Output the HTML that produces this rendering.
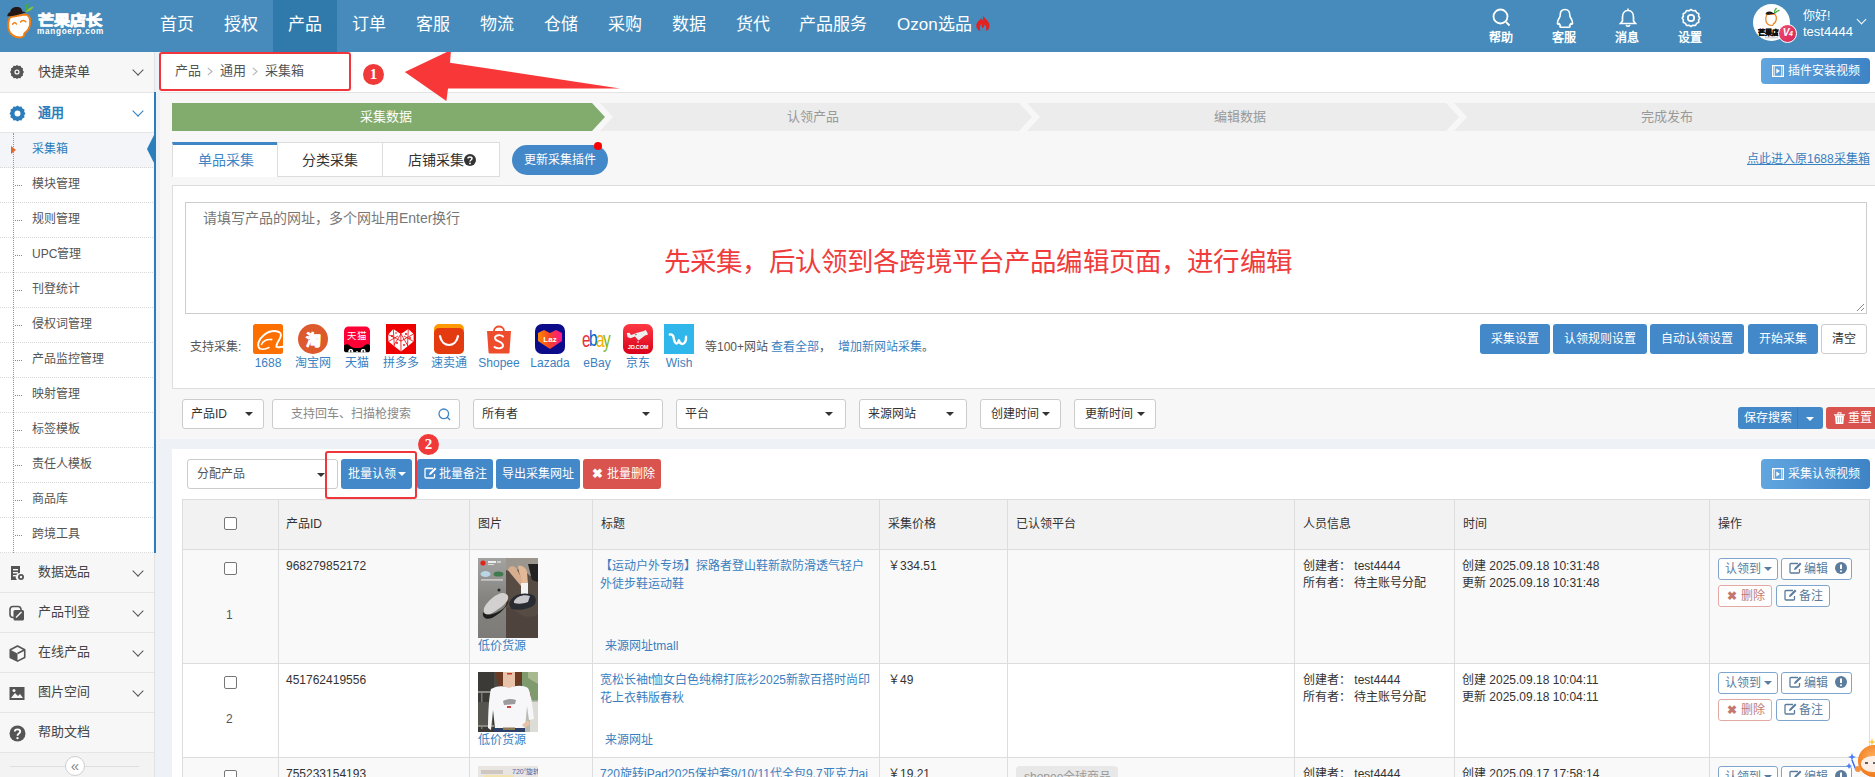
<!DOCTYPE html>
<html lang="zh-CN"><head><meta charset="utf-8">
<style>
*{box-sizing:border-box;margin:0;padding:0}
html,body{width:1875px;height:777px;overflow:hidden;background:#eef1f6;font-family:"Liberation Sans",sans-serif;font-size:12px;color:#333}
.abs{position:absolute}
#hdr{position:absolute;left:0;top:0;width:1875px;height:52px;background:#468bbb}
.nav{position:absolute;top:0;height:52px;line-height:49.5px;color:#fff;font-size:17px;text-align:center;width:64px}
.nav.act{background:#2f7aab}
.ri{position:absolute;top:0;width:40px;height:52px;color:#fff;text-align:center}
.ri svg{position:absolute;left:11px;top:8px}
.ri span{position:absolute;left:0;width:40px;top:30px;font-size:12px;line-height:16px;font-weight:bold}
#side{position:absolute;left:0;top:52px;width:155px;height:725px;background:#f7f7f7;border-right:1px solid #e2e2e2}
.mi{position:absolute;left:0;width:154px;height:40px;border-bottom:1px solid #e5e5e5;font-size:13px;color:#444;line-height:40px}
.mi .t{position:absolute;left:38px;top:0}
.mi svg.ic{position:absolute;left:9px;top:12px}
.mi .chev{position:absolute;left:133.5px;top:13.5px;width:8px;height:8px;border-right:1.5px solid #555;border-bottom:1.5px solid #555;transform:rotate(45deg)}
.si{position:absolute;left:0;width:153px;height:35px;border-bottom:1px dotted #d9d9d9;font-size:12px;color:#555;line-height:32px}
.si .t{position:absolute;left:32px}
.si .tick{position:absolute;left:15px;top:17px;width:7px;border-top:1px dotted #5a95c8}
.step{position:absolute;top:103px;height:28px;line-height:28px;text-align:center;font-size:13px;color:#999}
.tab{position:absolute;top:142px;height:35px;line-height:36px;text-align:center;font-size:14px;color:#333}
.btn{position:absolute;height:30px;background:#4388c8;color:#fff;border-radius:3px;font-size:12px;line-height:30px;text-align:center;white-space:nowrap}
.btnv{position:absolute;background:linear-gradient(90deg,#62a6e0,#3e83c5);color:#fff;border-radius:4px;font-size:12px;line-height:25px;text-align:center;white-space:nowrap;padding-left:13px}
.btnv svg.vi{position:absolute;left:11px;top:50%;margin-top:-6px}
.sel{position:absolute;top:399px;height:30px;background:#fff;border:1px solid #ccc;border-radius:3px;font-size:12px;line-height:28px;color:#333;padding-left:8px;white-space:nowrap}
.caret{position:absolute;top:12px;width:0;height:0;border-left:4px solid transparent;border-right:4px solid transparent;border-top:4px solid #333}
.vl{position:absolute;top:0;height:300px;border-left:1px solid #ddd}
.th{position:absolute;top:516px;font-size:12px;line-height:16px;color:#333}
.td{position:absolute;font-size:12px;line-height:16px;color:#333;white-space:nowrap}
.cb{position:absolute;width:13px;height:13px;border:1px solid #767676;border-radius:2px;background:#fff}
.ob{position:absolute;height:22px;border:1px solid #7ea5cd;border-radius:3px;background:#fff;color:#5b7c9c;font-size:12px;line-height:21px;text-align:center;white-space:nowrap}
.img-shoe{background:linear-gradient(90deg,#8a8a88 0,#7d7c78 48%,#4a443d 52%,#3e3a35 100%)}
.img-shirt{background:linear-gradient(90deg,#3c3a35,#ddd 30%,#f4f4f4 50%,#ddd 70%,#6e7060)}
.img-ipad{background:#d9d4cc}
</style></head><body>
<div id="hdr">
  <!-- logo -->
  <svg class="abs" style="left:0;top:0" width="36" height="42" viewBox="0 0 36 42">
    <path d="M10.5 17 C8 19 8 26 8.6 29 C9.5 34 14 37.5 20 37.5 C23 37.5 24.5 36 24.2 33.5 C28 31 30.5 26 30.2 21 C30 17 28 14.5 24.5 14.5Z" fill="#fff" stroke="#ef7d14" stroke-width="1.9" stroke-linejoin="round"/>
    <path d="M7.2 16.2 C7.5 13.5 9 12.5 10.2 12 C10.5 9 13 7 17 7 C20.5 7 22 9 22.3 11.5 C24 11.8 25.5 12 25.8 12.4 C21 14 12 16.5 7.2 16.2Z" fill="#231815"/>
    <path d="M25 12 C24.5 8 26 4 28 2.2 C29 5 28.5 9 25 12Z" fill="#3fae3a"/>
    <path d="M25.5 12.2 C27.5 9 30.5 7 33.8 6.6 C32.5 9.5 29 12 25.5 12.2Z" fill="#86c33a"/>
    <path d="M12.6 24.3 C13.5 22.3 15.5 22.3 16.4 24" stroke="#ef7d14" stroke-width="1.5" fill="none" stroke-linecap="round"/>
    <path d="M20.5 22 C22 20 24.5 20.3 25.8 21.8" stroke="#ef7d14" stroke-width="1.5" fill="none" stroke-linecap="round"/>
  </svg>
  <div class="abs" style="left:37.5px;top:9px;color:#fff;font-size:16px;font-weight:bold;line-height:20px;white-space:nowrap;-webkit-text-stroke:1.1px #fff;transform:scale(1,0.86);transform-origin:0 100%;letter-spacing:0.2px">芒果店长</div>
  <div class="abs" style="left:37px;top:26.5px;color:#fff;font-size:8.2px;font-weight:bold;line-height:9px;letter-spacing:0.7px;white-space:nowrap">mangoerp.com</div>

  <div class="nav" style="left:145px">首页</div>
  <div class="nav" style="left:209px">授权</div>
  <div class="nav act" style="left:273px">产品</div>
  <div class="nav" style="left:337px">订单</div>
  <div class="nav" style="left:401px">客服</div>
  <div class="nav" style="left:465px">物流</div>
  <div class="nav" style="left:529px">仓储</div>
  <div class="nav" style="left:593px">采购</div>
  <div class="nav" style="left:657px">数据</div>
  <div class="nav" style="left:721px">货代</div>
  <div class="nav" style="left:785px;width:96px">产品服务</div>
  <div class="nav" style="left:881px;width:120px;text-align:left;padding-left:16px">Ozon选品</div>
  <svg class="abs" style="left:976px;top:15px" width="14" height="16" viewBox="0 0 14 16"><path d="M6.5 0 C8 3 13.5 6 13.5 10.5 C13.5 13.5 12 15.5 9.8 16 C10.8 14 10.5 11.5 8.6 9.5 C8.3 11.5 7.3 12.8 6.2 13.4 C5.6 12 5.3 10.8 5.8 8.6 C3.8 10.3 3.3 13 4.3 16 C1.8 15.3 0.3 13.3 0.3 10.8 C0.3 7 4 5 5.6 2.8 C5.8 4.3 6.1 5 6.6 5.6 C7.2 3.8 7.2 1.8 6.5 0Z" fill="#e3211f"/></svg>

  <div class="ri" style="left:1481px">
    <svg width="20" height="20" viewBox="0 0 20 20"><circle cx="8.5" cy="8.5" r="7" fill="none" stroke="#fff" stroke-width="1.8"/><path d="M14 14 L17.5 17.5" stroke="#fff" stroke-width="1.8"/></svg>
    <span>帮助</span></div>
  <div class="ri" style="left:1544px">
    <svg width="20" height="20" viewBox="0 0 20 20" style="top:8px"><path d="M10 1.5 C6.5 1.5 5.2 4 5.2 7 C5.2 8 5 8.8 4.5 9.5 C3.5 11 2.2 13 2.4 15.5 C2.5 16.5 3.5 16.5 4.2 15.5 C4.5 16.5 5 17 5.5 17.5 C4.5 18 4.8 19.2 6 19.2 L9 19.2 C9.5 19.2 10.5 19.2 11 19.2 L14 19.2 C15.2 19.2 15.5 18 14.5 17.5 C15 17 15.5 16.5 15.8 15.5 C16.5 16.5 17.5 16.5 17.6 15.5 C17.8 13 16.5 11 15.5 9.5 C15 8.8 14.8 8 14.8 7 C14.8 4 13.5 1.5 10 1.5Z" fill="none" stroke="#fff" stroke-width="1.6" stroke-linejoin="round"/></svg>
    <span>客服</span></div>
  <div class="ri" style="left:1607px">
    <svg width="20" height="20" viewBox="0 0 20 20"><path d="M10 2.5 C6 2.5 4.5 6 4.5 9 L4.5 13 L2.5 15.5 L17.5 15.5 L15.5 13 L15.5 9 C15.5 6 14 2.5 10 2.5Z" fill="none" stroke="#fff" stroke-width="1.7"/><path d="M8 17 Q10 19.5 12 17" stroke="#fff" stroke-width="1.5" fill="none"/><path d="M10 0.5 L10 2.5" stroke="#fff" stroke-width="1.5"/></svg>
    <span>消息</span></div>
  <div class="ri" style="left:1670px">
    <svg width="20" height="20" viewBox="0 0 20 20"><path d="M10 1.5 L12 2.8 L14.5 2.5 L15.6 4.6 L17.8 5.7 L17.6 8.2 L18.8 10 L17.6 11.8 L17.8 14.3 L15.6 15.4 L14.5 17.5 L12 17.2 L10 18.5 L8 17.2 L5.5 17.5 L4.4 15.4 L2.2 14.3 L2.4 11.8 L1.2 10 L2.4 8.2 L2.2 5.7 L4.4 4.6 L5.5 2.5 L8 2.8Z" fill="none" stroke="#fff" stroke-width="1.6" stroke-linejoin="round"/><circle cx="10" cy="10" r="3.2" fill="none" stroke="#fff" stroke-width="1.8"/></svg>
    <span>设置</span></div>

  <div class="abs" style="left:1753px;top:4px;width:37px;height:37px;border-radius:50%;background:#fff;overflow:hidden">
    <svg width="37" height="37" viewBox="0 0 37 37"><g transform="translate(0,-2.5)"><path d="M14 13 C12.5 15 12.5 19 13.5 21 C14.5 23 16.5 24 19 24 C20 24 20.5 23 20.3 22.5 C22.5 21 23.5 18.5 23.3 16 C23 13.5 21.5 12.5 20 12.5Z" fill="#fff" stroke="#ef7d14" stroke-width="1.2"/><path d="M12.5 12.8 C13 11 14 10 16 10 C18 9.6 19.5 10.5 20 11.5 C21 11.6 22 11.8 22.3 12 C19 13 15 13.5 12.5 12.8Z" fill="#231815"/><path d="M21.5 11.5 C21.5 9.5 22.5 7.5 23.5 6.5 M22 11.8 C23 10 24.5 9 26.5 8.8" stroke="#3fae3a" stroke-width="1.3" fill="none"/></g><text x="18.5" y="31" text-anchor="middle" font-size="7.2" font-weight="bold" fill="#111" stroke="#111" stroke-width="0.5">芒果店长</text><rect x="12" y="33.5" width="13" height="0.7" fill="#aaa"/></svg>
  </div>
  <div class="abs" style="left:1778px;top:24px;width:19px;height:19px;border-radius:50%;background:linear-gradient(135deg,#f0506e,#d6245a);border:1.5px solid #fff;color:#fff;font-size:10px;font-weight:bold;line-height:16px;text-align:center;font-style:italic;letter-spacing:-0.5px">V<span style="font-size:7px">4</span></div>
  <div class="abs" style="left:1803px;top:8px;color:#fff;font-size:12px;line-height:16px">你好!</div>
  <div class="abs" style="left:1803px;top:24px;color:#fff;font-size:13px;line-height:16px">test4444</div>
  <div class="abs" style="left:1858px;top:16px;width:7px;height:7px;border-right:1.5px solid #fff;border-bottom:1.5px solid #fff;transform:rotate(45deg)"></div>
</div>

<div id="side">

  <div class="mi" style="top:0;height:41px;background:#f7f7f7">
    <svg class="ic" width="16" height="16" viewBox="0 0 16 16"><path d="M8 1 L9.6 2 L11.5 1.8 L12.3 3.5 L14 4.3 L13.8 6.2 L15 8 L13.8 9.8 L14 11.7 L12.3 12.5 L11.5 14.2 L9.6 14 L8 15 L6.4 14 L4.5 14.2 L3.7 12.5 L2 11.7 L2.2 9.8 L1 8 L2.2 6.2 L2 4.3 L3.7 3.5 L4.5 1.8 L6.4 2Z" fill="#555"/><circle cx="8" cy="8" r="2.6" fill="#f7f7f7"/><circle cx="8" cy="8" r="1.3" fill="#555"/></svg>
    <span class="t">快捷菜单</span><i class="chev"></i></div>
  <div class="mi" style="top:41px;background:#fff;color:#2b7dbc;font-weight:bold">
    <svg class="ic" width="17" height="17" viewBox="0 0 16 16"><path d="M8 0.5 L9.7 1.7 L11.8 1.4 L12.6 3.4 L14.6 4.2 L14.3 6.3 L15.5 8 L14.3 9.7 L14.6 11.8 L12.6 12.6 L11.8 14.6 L9.7 14.3 L8 15.5 L6.3 14.3 L4.2 14.6 L3.4 12.6 L1.4 11.8 L1.7 9.7 L0.5 8 L1.7 6.3 L1.4 4.2 L3.4 3.4 L4.2 1.4 L6.3 1.7Z" fill="#2b7dbc"/><circle cx="8" cy="8" r="2.8" fill="#fff"/></svg>
    <span class="t">通用</span><i class="chev" style="border-color:#2b7dbc"></i></div>
  <div class="abs" style="left:154px;top:40px;width:2px;height:461px;background:#2b7dbc"></div>
  <div class="si" style="top:81px;background:#f3f5f9;color:#2b7dbc"><i class="abs" style="left:11px;top:13px;border-left:5px solid #e0662a;border-top:4px solid transparent;border-bottom:4px solid transparent"></i><span class="t">采集箱</span></div>
  <i class="abs" style="left:147px;top:82.5px;border-right:7px solid #2b7dbc;border-top:14px solid transparent;border-bottom:14px solid transparent"></i>
  <div class="si" style="top:116px;background:#fff"><i class="tick"></i><span class="t">模块管理</span></div>
  <div class="si" style="top:151px;background:#fff"><i class="tick"></i><span class="t">规则管理</span></div>
  <div class="si" style="top:186px;background:#fff"><i class="tick"></i><span class="t">UPC管理</span></div>
  <div class="si" style="top:221px;background:#fff"><i class="tick"></i><span class="t">刊登统计</span></div>
  <div class="si" style="top:256px;background:#fff"><i class="tick"></i><span class="t">侵权词管理</span></div>
  <div class="si" style="top:291px;background:#fff"><i class="tick"></i><span class="t">产品监控管理</span></div>
  <div class="si" style="top:326px;background:#fff"><i class="tick"></i><span class="t">映射管理</span></div>
  <div class="si" style="top:361px;background:#fff"><i class="tick"></i><span class="t">标签模板</span></div>
  <div class="si" style="top:396px;background:#fff"><i class="tick"></i><span class="t">责任人模板</span></div>
  <div class="si" style="top:431px;background:#fff"><i class="tick"></i><span class="t">商品库</span></div>
  <div class="si" style="top:466px;background:#fff"><i class="tick"></i><span class="t">跨境工具</span></div>
  <div class="abs" style="left:13px;top:81px;height:420px;border-left:1px dotted #6aa0d0"></div>
  <div class="mi" style="top:501px;line-height:38px"><svg class="ic" width="16" height="16" viewBox="0 0 16 16"><path d="M2 1 H11 V8 A4 4 0 0 0 8 15 H2Z" fill="#555"/><rect x="4" y="4" width="5" height="1.4" fill="#f7f7f7"/><rect x="4" y="7" width="5" height="1.4" fill="#f7f7f7"/><rect x="4" y="10" width="3" height="1.4" fill="#f7f7f7"/><circle cx="12" cy="12" r="3" fill="#555"/><circle cx="12" cy="12" r="1.2" fill="#f7f7f7"/></svg><span class="t">数据选品</span><i class="chev"></i></div>
  <div class="mi" style="top:541px;line-height:38px"><svg class="ic" width="16" height="16" viewBox="0 0 16 16"><rect x="1" y="1.5" width="11" height="11" rx="3" fill="none" stroke="#555" stroke-width="1.6"/><rect x="4.5" y="5" width="10.5" height="10.5" rx="1.5" fill="#555"/><path d="M7 12.5 L12.5 7" stroke="#f7f7f7" stroke-width="1.5"/></svg><span class="t">产品刊登</span><i class="chev"></i></div>
  <div class="mi" style="top:581px;line-height:38px"><svg class="ic" width="17" height="17" viewBox="0 0 16 16"><path d="M8 1 L14.8 4.5 V11.8 L8 15.2 L1.2 11.8 V4.5Z" fill="#f7f7f7" stroke="#555" stroke-width="1.5" stroke-linejoin="round"/><path d="M1.2 4.5 L8 8 V15.2 L1.2 11.8Z" fill="#555"/><path d="M8 8 L14.8 4.5" stroke="#555" stroke-width="1.5"/></svg><span class="t">在线产品</span><i class="chev"></i></div>
  <div class="mi" style="top:621px;line-height:38px"><svg class="ic" width="16" height="16" viewBox="0 0 16 16"><rect x="0.5" y="2" width="15" height="13" fill="#555"/><path d="M2 13 L6 8 L9 11 L11 9 L14 13Z" fill="#f7f7f7"/><circle cx="5" cy="5.5" r="1.5" fill="#f7f7f7"/></svg><span class="t">图片空间</span><i class="chev"></i></div>
  <div class="mi" style="top:661px;line-height:38px"><svg class="ic" width="17" height="17" viewBox="0 0 16 16"><circle cx="8" cy="8" r="7.5" fill="#555"/><path d="M5.5 6 C5.5 3.5 10.5 3.5 10.5 6 C10.5 8 8 8 8 10" stroke="#fff" stroke-width="1.8" fill="none"/><circle cx="8" cy="12.3" r="1.1" fill="#fff"/></svg><span class="t">帮助文档</span></div>
  <div class="abs" style="left:0;top:701px;width:154px;height:30px;background:#f3f3f3"></div>
  <div class="abs" style="left:10px;top:714px;width:129px;border-top:1px solid #dedede"></div>
  <div class="abs" style="left:65px;top:704px;width:20px;height:20px;border-radius:50%;border:1px solid #cfcfcf;background:#fff;color:#888;font-size:15px;line-height:17px;text-align:center">&laquo;</div>
</div>

<div id="main">

  <!-- breadcrumb bar -->
  <div class="abs" style="left:160px;top:52px;width:1715px;height:41px;background:#fff;border-bottom:1px solid #e3e3e3"></div>
  <div class="abs" style="left:175px;top:62px;font-size:13px;line-height:18px;color:#555">产品<svg style="margin:0 7px 0 6px;vertical-align:-1px" width="6" height="9" viewBox="0 0 6 9"><path d="M0.8 0.8 L5 4.5 L0.8 8.2" fill="none" stroke="#b5b5b5" stroke-width="1.1"/></svg>通用<svg style="margin:0 7px 0 6px;vertical-align:-1px" width="6" height="9" viewBox="0 0 6 9"><path d="M0.8 0.8 L5 4.5 L0.8 8.2" fill="none" stroke="#b5b5b5" stroke-width="1.1"/></svg>采集箱</div>
  <div class="abs" style="left:159px;top:52px;width:192px;height:39px;border:2px solid #f0353b;border-radius:3px"></div>
  <div class="abs" style="left:363px;top:64px;width:21px;height:21px;border-radius:50%;background:#f03a3a;color:#fff;font-family:'Liberation Serif',serif;font-weight:bold;font-size:15px;line-height:21px;text-align:center">1</div>
  <a class="abs btnv" style="left:1761px;top:58px;width:109px;height:26px;line-height:26px;padding-left:16px"><svg class="vi" width="12" height="12" viewBox="0 0 12 12"><rect x="0.6" y="0.6" width="10.8" height="10.8" fill="none" stroke="#fff" stroke-width="1.2"/><path d="M2.3 0.6 V11.4 M9.7 0.6 V11.4" stroke="#fff" stroke-width="0.8"/><path d="M4.3 3.5 L8 6 L4.3 8.5Z" fill="#fff"/></svg>插件安装视频</a>

  <!-- upper panel -->
  <div class="abs" style="left:160px;top:93px;width:1715px;height:346px;background:#f7f7f7"></div>
  <svg class="abs" style="left:0;top:0" width="1875" height="140" viewBox="0 0 1875 140">
    <polygon points="172,103 592,103 605,117 592,131 172,131" fill="#81ac6e"/>
    <polygon points="600,103 1019,103 1032,117 1019,131 600,131 613,117" fill="#ececec"/>
    <polygon points="1027,103 1446,103 1459,117 1446,131 1027,131 1040,117" fill="#ececec"/>
    <polygon points="1454,103 1880,103 1880,131 1454,131 1467,117" fill="#ececec"/>
  </svg>
  <div class="abs step" style="left:172px;width:427px;color:#fff">采集数据</div>
  <div class="abs step" style="left:599px;width:427px">认领产品</div>
  <div class="abs step" style="left:1026px;width:427px">编辑数据</div>
  <div class="abs step" style="left:1453px;width:427px">完成发布</div>

  <svg class="abs" style="left:400px;top:52px" width="230" height="52" viewBox="400 52 230 52"><path d="M404.8 72.1 L451 50 L450 62.8 L620 88.4 L448 88.4 L446.4 101 Z" fill="#f83838"/></svg>
  <!-- tabs -->
  <div class="abs" style="left:172px;top:142px;width:328px;height:35px;border:1px solid #ddd;background:#fff"></div>
  <div class="abs tab" style="left:172px;width:106px;line-height:30px;border-top:3px solid #3e86c6;color:#3e86c6;background:#fff;border-left:1px solid #ddd">单品采集</div>
  <div class="abs" style="left:277px;top:142px;height:35px;border-left:1px solid #ddd"></div>
  <div class="abs tab" style="left:278px;width:104px">分类采集</div>
  <div class="abs" style="left:382px;top:142px;height:35px;border-left:1px solid #ddd"></div>
  <div class="abs tab" style="left:383px;width:117px">店铺采集<svg style="vertical-align:-1px;margin-left:0px" width="12" height="12" viewBox="0 0 12 12"><circle cx="6" cy="6" r="6" fill="#333"/><path d="M4 4.6 C4 2.6 8 2.6 8 4.6 C8 6 6 6 6 7.5" stroke="#fff" stroke-width="1.5" fill="none"/><circle cx="6" cy="9.4" r="0.9" fill="#fff"/></svg></div>
  <div class="abs" style="left:512px;top:145px;width:96px;height:30px;border-radius:15px;background:#4388c8;color:#fff;font-size:12px;line-height:30px;text-align:center">更新采集插件</div>
  <div class="abs" style="left:594px;top:142px;width:8px;height:8px;border-radius:50%;background:#f00"></div>
  <div class="abs" style="left:1747px;top:151px;font-size:12px;line-height:16px;color:#3a7fc0;text-decoration:underline">点此进入原1688采集箱</div>

  <!-- collect panel -->
  <div class="abs" style="left:172px;top:185px;width:1703px;height:204px;background:#fff;border:1px solid #ddd;border-right:none"></div>
  <div class="abs" style="left:185px;top:202px;width:1682px;height:112px;border:1px solid #ccc;background:#fff"></div>
  <div class="abs" style="left:203px;top:209px;font-size:14px;line-height:18px;color:#777">请填写产品的网址，多个网址用Enter换行</div>
  <div class="abs" style="left:664px;top:245px;font-size:26.47px;line-height:34px;color:#f03c3c;white-space:nowrap;letter-spacing:0.16px">先采集，后认领到各跨境平台产品编辑页面，进行编辑</div>
  <svg class="abs" style="left:1855px;top:302px" width="10" height="10" viewBox="0 0 10 10"><path d="M9 2 L2 9 M9 6 L6 9" stroke="#888" stroke-width="1"/></svg>
  <div class="abs" style="left:190px;top:339px;font-size:12px;line-height:16px;color:#555">支持采集:</div>
  <div class="abs" style="left:253px;top:324px;width:30px;height:30px"><svg width="30" height="30" viewBox="0 0 30 30"><rect width="30" height="30" rx="2.5" fill="#fd7000"/><path d="M6.5 24.5 C3.5 21 6 15 11 11 C16 7 22 6.5 26 8 C29 9.5 28 13 26 16 C24.5 18.5 23 21 23.5 23 C25 23.7 27.5 23 30 22.8" fill="none" stroke="#fff" stroke-width="1.9" stroke-linecap="round"/><path d="M6.5 24.5 C9 25.5 13 25 16 23.5 M8.5 20.5 C10 17 14 15 17.5 15.5" fill="none" stroke="#fff" stroke-width="1.5" stroke-linecap="round"/><circle cx="18.5" cy="15.5" r="1" fill="#fff"/></svg></div>
  <div class="abs" style="left:238px;top:355px;width:60px;text-align:center;font-size:12px;line-height:16px;color:#3a7fc0">1688</div>
  <div class="abs" style="left:298px;top:324px;width:30px;height:30px"><svg width="30" height="30" viewBox="0 0 30 30"><circle cx="15" cy="15" r="15" fill="#dd5a2c"/><text x="15" y="21" text-anchor="middle" font-size="15" font-weight="bold" fill="#fff" stroke="#fff" stroke-width="0.7">淘</text></svg></div>
  <div class="abs" style="left:283px;top:355px;width:60px;text-align:center;font-size:12px;line-height:16px;color:#3a7fc0">淘宝网</div>
  <div class="abs" style="left:344px;top:324px;width:26px;height:30px"><svg width="26" height="30" viewBox="0 0 26 30"><path d="M0 8 C0 4 2 2.5 5 2.5 H21 C24 2.5 26 4 26 8 V25 C26 27 25 28 23 28 H3 C1 28 0 27 0 25Z" fill="#ff0036"/><text x="13" y="14.5" text-anchor="middle" font-size="9.5" fill="#fff">天猫</text><path d="M0 22 C0.5 20 3 19.5 5 21 C7 23.5 9 24 13 24 C17 24 19 23.5 21 21 C23 19.5 25.5 20 26 22 V26 C26 27.5 25 28.3 23.5 28.3 H2.5 C1 28.3 0 27.5 0 26Z" fill="#000"/><path d="M4.3 28.3 C4.3 25.3 5.6 25 6.8 25 C8 25 9.3 25.3 9.3 28.3Z M16.7 28.3 C16.7 25.3 18 25 19.2 25 C20.4 25 21.7 25.3 21.7 28.3Z" fill="#fff"/><path d="M6.3 28.3 V26.3 C6.3 26 7.3 26 7.3 26.3 V28.3Z M18.7 28.3 V26.3 C18.7 26 19.7 26 19.7 26.3 V28.3Z" fill="#000"/><rect x="12.3" y="27" width="1.4" height="1.3" fill="#fff"/></svg></div>
  <div class="abs" style="left:327px;top:355px;width:60px;text-align:center;font-size:12px;line-height:16px;color:#3a7fc0">天猫</div>
  <div class="abs" style="left:386px;top:324px;width:30px;height:30px"><svg width="30" height="30" viewBox="0 0 30 30"><rect width="30" height="30" fill="#ee0000"/><path d="M2.2 10.5 L7.3 5 L14.8 10 L22.3 5 L27.6 10 L27.6 17.5 L15 27.5 L2.4 17.5Z" fill="#fff"/><path d="M7.3 5 L8.3 22 M14.8 10 L15 27.5 M22.3 5 L21.5 22.5 M2.2 10.5 L15 17 L27.6 10 M2.4 17.5 L12 12 M27.6 17.5 L18 12 M8 21 L14.8 10 M21.7 21.5 L15 10" stroke="#ee0000" stroke-width="0.8" fill="none"/><circle cx="6" cy="12" r="1" fill="#ee0000"/><circle cx="11" cy="19" r="0.9" fill="#ee0000"/><circle cx="20" cy="10" r="1" fill="#ee0000"/><circle cx="24" cy="14" r="0.9" fill="#ee0000"/><circle cx="18" cy="21" r="0.9" fill="#ee0000"/><circle cx="10" cy="9" r="0.8" fill="#ee0000"/></svg></div>
  <div class="abs" style="left:371px;top:355px;width:60px;text-align:center;font-size:12px;line-height:16px;color:#3a7fc0">拼多多</div>
  <div class="abs" style="left:434px;top:324px;width:30px;height:30px"><svg width="30" height="30" viewBox="0 0 30 30"><rect width="30" height="30" rx="5" fill="#ff9a00"/><rect y="4" width="30" height="26" rx="5" fill="#e43a0f"/><path d="M6 12 C8 24 22 24 24 12" fill="none" stroke="#fff" stroke-width="2.2" stroke-linecap="round"/></svg></div>
  <div class="abs" style="left:419px;top:355px;width:60px;text-align:center;font-size:12px;line-height:16px;color:#3a7fc0">速卖通</div>
  <div class="abs" style="left:486px;top:324px;width:26px;height:30px"><svg width="26" height="30" viewBox="0 0 26 30"><path d="M8 7 C8 1 18 1 18 7" fill="none" stroke="#ee4d2d" stroke-width="1.8"/><path d="M1 7 H25 L23.5 28 C23.5 29 23 29.5 22 29.5 H4 C3 29.5 2.5 29 2.5 28Z" fill="#ee4d2d"/><path d="M17 12.5 C15 10.5 9 10.5 9 14 C9 18 17 17 17 21.5 C17 25 11 25 8.5 23" fill="none" stroke="#fff" stroke-width="1.9" stroke-linecap="round"/></svg></div>
  <div class="abs" style="left:469px;top:355px;width:60px;text-align:center;font-size:12px;line-height:16px;color:#3a7fc0">Shopee</div>
  <div class="abs" style="left:535px;top:324px;width:30px;height:30px"><svg width="30" height="30" viewBox="0 0 30 30"><defs><linearGradient id="lz" x1="0" x2="1"><stop offset="0" stop-color="#ff8a00"/><stop offset="0.5" stop-color="#f5412a"/><stop offset="1" stop-color="#ff1591"/></linearGradient></defs><rect width="30" height="30" rx="7" fill="#0c0b8a"/><path d="M3 9 L9 6 L15 9 L21 6 L27 9 V17 L15 25 L3 17Z" fill="url(#lz)"/><text x="15" y="18" text-anchor="middle" font-size="8" font-weight="bold" fill="#fff" font-family="Liberation Sans">Laz</text></svg></div>
  <div class="abs" style="left:520px;top:355px;width:60px;text-align:center;font-size:12px;line-height:16px;color:#3a7fc0">Lazada</div>
  <div class="abs" style="left:582px;top:324px;width:30px;height:30px"><svg width="30" height="30" viewBox="0 0 30 30"><g transform="scale(0.7,1)"><text x="0" y="23" font-size="22" font-family="Liberation Sans" letter-spacing="-2.2"><tspan fill="#e53238">e</tspan><tspan fill="#0064d2" dy="-1">b</tspan><tspan fill="#f5af02" dy="1">a</tspan><tspan fill="#86b817">y</tspan></text></g></svg></div>
  <div class="abs" style="left:567px;top:355px;width:60px;text-align:center;font-size:12px;line-height:16px;color:#3a7fc0">eBay</div>
  <div class="abs" style="left:623px;top:324px;width:30px;height:30px"><svg width="30" height="30" viewBox="0 0 30 30"><defs><linearGradient id="jd" x1="0" y1="0" x2="0" y2="1"><stop offset="0" stop-color="#ff3a44"/><stop offset="1" stop-color="#d8001a"/></linearGradient></defs><rect width="30" height="30" rx="6.5" fill="url(#jd)"/><path d="M3.8 9 L6.5 8.8 L8 11 L15 8.5 L21 7 L22.5 5.8 L24 8 L25 10.5 L22 11.5 L15.5 16.5 L12 12.5 L7.5 14.3 L4.5 13Z" fill="#eee"/><path d="M11.5 10.5 L14 10 L13 11.3Z" fill="#555"/><circle cx="15" cy="18" r="0.8" fill="#eee"/><text x="15" y="25" text-anchor="middle" font-size="5.6" font-weight="bold" fill="#fff" font-family="Liberation Sans" letter-spacing="-0.2">JD.COM</text></svg></div>
  <div class="abs" style="left:608px;top:355px;width:60px;text-align:center;font-size:12px;line-height:16px;color:#3a7fc0">京东</div>
  <div class="abs" style="left:664px;top:324px;width:30px;height:30px"><svg width="30" height="30" viewBox="0 0 30 30"><rect width="30" height="30" fill="#2fb7ec"/><path d="M5.8 10.5 C7.3 10.2 9 11 9.5 13 C10 16 10.6 19.5 12.6 19.5 C14 19.5 14.6 17.5 14.9 16.3 C15.3 18 16.2 20 18.5 20 C21 20 22.3 16 22 12.8" fill="none" stroke="#fff" stroke-width="2.4" stroke-linecap="round" stroke-linejoin="round"/></svg></div>
  <div class="abs" style="left:649px;top:355px;width:60px;text-align:center;font-size:12px;line-height:16px;color:#3a7fc0">Wish</div>
  <div class="abs" style="left:705px;top:339px;font-size:12px;line-height:16px;color:#555;white-space:nowrap">等100+网站 <span style="color:#3a7fc0">查看全部</span>， <span style="color:#3a7fc0;margin-left:3px">增加新网站采集</span>。</div>
  <div class="abs btn" style="left:1480px;top:324px;width:70px">采集设置</div>
  <div class="abs btn" style="left:1553px;top:324px;width:94px">认领规则设置</div>
  <div class="abs btn" style="left:1650px;top:324px;width:94px">自动认领设置</div>
  <div class="abs btn" style="left:1748px;top:324px;width:70px">开始采集</div>
  <div class="abs btn" style="left:1821px;top:324px;width:46px;background:#fff;color:#333;border:1px solid #ccc;line-height:28px">清空</div>

  <!-- filters -->
  <div class="abs sel" style="left:182px;width:82px">产品ID<i class="caret" style="left:62px"></i></div>
  <div class="abs sel" style="left:272px;width:188px;color:#888;padding-left:18px">支持回车、扫描枪搜索<svg class="abs" style="left:165px;top:8px" width="13" height="13" viewBox="0 0 13 13"><circle cx="5.8" cy="5.8" r="4.8" fill="none" stroke="#3e86c6" stroke-width="1.3"/><path d="M9.3 9.3 L12 12" stroke="#3e86c6" stroke-width="1.3"/></svg></div>
  <div class="abs sel" style="left:473px;width:190px">所有者<i class="caret" style="left:168px"></i></div>
  <div class="abs sel" style="left:676px;width:170px">平台<i class="caret" style="left:148px"></i></div>
  <div class="abs sel" style="left:859px;width:108px">来源网站<i class="caret" style="left:86px"></i></div>
  <div class="abs sel" style="left:980px;width:81px;padding-left:10px">创建时间<i class="caret" style="left:61px"></i></div>
  <div class="abs sel" style="left:1074px;width:82px;padding-left:10px">更新时间<i class="caret" style="left:62px"></i></div>
  <div class="abs btn" style="left:1738px;top:407px;width:85px;height:22px;line-height:22px;text-align:left;padding-left:6px">保存搜索<i class="abs" style="left:59px;top:0;height:22px;border-left:1px solid #3a7ab5"></i><i class="caret" style="left:68px;top:10px;border-top-color:#fff"></i></div>
  <div class="abs btn" style="left:1826px;top:407px;width:60px;height:22px;line-height:22px;background:#d9534f;text-align:left;padding-left:8px"><svg style="vertical-align:-2px;margin-right:3px" width="11" height="12" viewBox="0 0 11 12"><path d="M0 2.2 H11 V3.4 H0Z M3.5 0.3 H7.5 V2.2 H6.5 V1.2 H4.5 V2.2 H3.5Z M1 3.8 H10 L9.3 12 H1.7Z" fill="#fff"/><path d="M3.5 5 V10.5 M5.5 5 V10.5 M7.5 5 V10.5" stroke="#e8a8a0" stroke-width="0.8"/></svg>重置</div>

  <!-- lower panel -->
  <div class="abs" style="left:172px;top:449px;width:1703px;height:328px;background:#fff"></div>
  <div class="abs sel" style="left:187px;top:459px;width:151px;height:30px;color:#555;padding-left:9px">分配产品<i class="caret" style="left:129px;top:13px"></i></div>
  <div class="abs btn" style="left:341px;top:459px;width:71px;height:30px">批量认领<i class="caret" style="position:static;display:inline-block;vertical-align:2px;margin-left:2px;border-top-color:#fff"></i></div>
  <div class="abs" style="left:325px;top:451px;width:92px;height:48px;border:2px solid #f0353b;border-radius:3px"></div>
  <div class="abs" style="left:418px;top:434px;width:21px;height:21px;border-radius:50%;background:#f03a3a;color:#fff;font-family:'Liberation Serif',serif;font-weight:bold;font-size:15px;line-height:21px;text-align:center">2</div>
  <div class="abs btn" style="left:417px;top:459px;width:76px;height:30px;padding-left:1px"><svg style="vertical-align:-1px;margin-right:2px" width="13" height="12" viewBox="0 0 13 12"><path d="M9 1.5 H2 A1 1 0 0 0 1 2.5 V10 A1 1 0 0 0 2 11 H9.5 A1 1 0 0 0 10.5 10 V7" fill="none" stroke="#fff" stroke-width="1.3"/><path d="M5 8 L5.5 6 L11 0.5 L12.5 2 L7 7.5Z" fill="#fff"/></svg>批量备注</div>
  <div class="abs btn" style="left:496px;top:459px;width:84px;height:30px">导出采集网址</div>
  <div class="abs btn" style="left:583px;top:459px;width:78px;height:30px;background:#d9534f;padding-left:3px"><b style="font-size:13px;font-family:'Liberation Sans',sans-serif">&#x2716;</b> 批量删除</div>
  <a class="abs btnv" style="left:1761px;top:459px;width:109px;height:30px;line-height:30px;padding-left:16px"><svg class="vi" width="12" height="12" viewBox="0 0 12 12"><rect x="0.6" y="0.6" width="10.8" height="10.8" fill="none" stroke="#fff" stroke-width="1.2"/><path d="M2.3 0.6 V11.4 M9.7 0.6 V11.4" stroke="#fff" stroke-width="0.8"/><path d="M4.3 3.5 L8 6 L4.3 8.5Z" fill="#fff"/></svg>采集认领视频</a>

  <!-- table -->
  <div class="abs" style="left:182px;top:499px;width:1688px;height:278px;border:1px solid #ddd;border-bottom:none;overflow:hidden">
    <div class="abs" style="left:0;top:0;width:1686px;height:50px;background:#f2f2f2;border-bottom:1px solid #ddd"></div>
    <div class="abs" style="left:0;top:50px;width:1686px;height:114px;background:#f9f9f9;border-bottom:1px solid #ddd"></div>
    <div class="abs" style="left:0;top:164px;width:1686px;height:94px;background:#fff;border-bottom:1px solid #ddd"></div>
    <div class="abs" style="left:0;top:258px;width:1686px;height:30px;background:#f9f9f9"></div>
    <!-- col borders -->
    <i class="vl" style="left:95px"></i><i class="vl" style="left:286px"></i><i class="vl" style="left:409px"></i><i class="vl" style="left:696px"></i><i class="vl" style="left:824px"></i><i class="vl" style="left:1111px"></i><i class="vl" style="left:1271px"></i><i class="vl" style="left:1526px"></i>
  </div>
  <div class="abs th" style="left:286px">产品ID</div>
  <div class="abs th" style="left:478px">图片</div>
  <div class="abs th" style="left:601px">标题</div>
  <div class="abs th" style="left:888px">采集价格</div>
  <div class="abs th" style="left:1016px">已认领平台</div>
  <div class="abs th" style="left:1303px">人员信息</div>
  <div class="abs th" style="left:1463px">时间</div>
  <div class="abs th" style="left:1718px">操作</div>
  <i class="cb" style="left:224px;top:517px"></i>
  <i class="cb" style="left:224px;top:562px"></i>
  <div class="abs td" style="left:286px;top:558px">968279852172</div>
  <div class="abs td" style="left:888px;top:558px">￥334.51</div>
  <div class="abs td" style="left:1303px;top:558px;line-height:17px">创建者：&nbsp;test4444<br>所有者：&nbsp;待主账号分配</div>
  <div class="abs td" style="left:1462px;top:558px;line-height:17px">创建 2025.09.18 10:31:48<br>更新 2025.09.18 10:31:48</div>
  <div class="abs td" style="left:600px;top:558px;line-height:17.5px;color:#3a7fc0">【运动户外专场】探路者登山鞋新款防滑透气轻户<br>外徒步鞋运动鞋</div>
  <div class="abs ob" style="left:1718px;top:558px;width:60px">认领到<i class="caret" style="position:static;display:inline-block;vertical-align:2px;margin-left:3px;border-top-color:#5b7c9c"></i></div>
  <div class="abs ob" style="left:1781px;top:558px;width:71px;text-align:left;padding-left:7px"><svg style="vertical-align:-1px;margin-right:2px" width="13" height="12" viewBox="0 0 13 12"><path d="M9 1.5 H2 A1 1 0 0 0 1 2.5 V10 A1 1 0 0 0 2 11 H9.5 A1 1 0 0 0 10.5 10 V7" fill="none" stroke="#5b7c9c" stroke-width="1.3"/><path d="M5 8 L5.5 6 L11 0.5 L12.5 2 L7 7.5Z" fill="#5b7c9c"/></svg>编辑<svg style="vertical-align:-1px;margin-left:7px" width="12" height="12" viewBox="0 0 12 12"><circle cx="6" cy="6" r="6" fill="#5b7c9c"/><path d="M6 2.5 V7" stroke="#fff" stroke-width="2"/><circle cx="6" cy="9.2" r="1" fill="#fff"/></svg></div>
  <div class="abs" style="left:226px;top:606.5px;font-size:12px;line-height:16px;color:#555">1</div>
  <div class="abs ob" style="left:1718px;top:585px;width:54px;border-color:#e2aaa2;color:#c27a70;padding-left:2px"><b style="font-size:12px;color:#c27a70">&#x2716;</b> 删除</div>
  <div class="abs ob" style="left:1776px;top:585px;width:54px"><svg style="vertical-align:-1px;margin-right:2px" width="13" height="12" viewBox="0 0 13 12"><path d="M9 1.5 H2 A1 1 0 0 0 1 2.5 V10 A1 1 0 0 0 2 11 H9.5 A1 1 0 0 0 10.5 10 V7" fill="none" stroke="#5b7c9c" stroke-width="1.3"/><path d="M5 8 L5.5 6 L11 0.5 L12.5 2 L7 7.5Z" fill="#5b7c9c"/></svg>备注</div>
  <div class="abs td" style="left:478px;top:638px;color:#3a7fc0">低价货源</div>
  <div class="abs td" style="left:605px;top:638px;color:#3a7fc0">来源网址tmall</div>
  <div class="abs" style="left:478px;top:558px;width:60px;height:80px;overflow:hidden"><svg width="60" height="80" viewBox="0 0 60 80"><defs><linearGradient id="sg" x1="0" y1="0" x2="0" y2="1"><stop offset="0" stop-color="#a3a3a1"/><stop offset="0.5" stop-color="#858481"/><stop offset="1" stop-color="#7c7b78"/></linearGradient></defs>
<rect width="28" height="80" fill="url(#sg)"/><rect x="28" width="32" height="80" fill="#574c43"/>
<path d="M28 0 H60 V14 L52 18 L44 10 L34 14 L28 12Z" fill="#9c978e"/><path d="M50 6 L60 6 V24 L54 22Z" fill="#222"/>
<path d="M30 12 C31 8 35 7 38 10 L47 26 L43 28 L33 16Z" fill="#d6ad8e"/><path d="M40 8 C44 7 48 10 49 14 L50 26 L45 26 L41 14Z" fill="#e2b897"/>
<rect x="43" y="25" width="7" height="12" fill="#f3f3f3"/>
<path d="M31 46 C33 38 42 34 52 36 C57 37 59 41 57 46 C53 51 40 53 33 51Z" fill="#2a2c33"/><path d="M36 43 C39 38 46 36 52 38 L50 44 C45 46 40 46 36 45Z" fill="#c9c7cc"/>
<path d="M28 50 C34 48 40 56 46 58 C52 60 58 58 60 56 V80 H28Z" fill="#4b423a" opacity="0.7"/>
<path d="M6 50 C10 42 18 36 24 35 C28 35 31 37 30 41 C28 46 20 52 12 56 C8 58 5 56 6 50Z" fill="#d2d1cf"/><path d="M5 54 C9 59 18 56 26 50 L31 42 C30 48 22 56 14 60 C8 62 4 60 5 54Z" fill="#1e1e1e"/><circle cx="21" cy="32" r="1.5" fill="#222"/>
<circle cx="5" cy="5" r="2.6" fill="#e2241b"/><rect x="10" y="3" width="8" height="2" fill="#eee"/><rect x="10" y="6" width="6" height="1" fill="#ddd"/><rect x="19" y="3" width="4" height="2" fill="#ccc"/>
<ellipse cx="7.5" cy="16" rx="5" ry="3" fill="#b9d6e6"/><ellipse cx="20.5" cy="16" rx="5" ry="2.6" fill="#3e7a4e"/><rect x="3" y="21" width="22" height="1.8" fill="#d8d8d8" opacity=".7"/></svg></div>
  <i class="cb" style="left:224px;top:676px"></i>
  <div class="abs td" style="left:286px;top:672px">451762419556</div>
  <div class="abs td" style="left:888px;top:672px">￥49</div>
  <div class="abs td" style="left:1303px;top:672px;line-height:17px">创建者：&nbsp;test4444<br>所有者：&nbsp;待主账号分配</div>
  <div class="abs td" style="left:1462px;top:672px;line-height:17px">创建 2025.09.18 10:04:11<br>更新 2025.09.18 10:04:11</div>
  <div class="abs td" style="left:600px;top:672px;line-height:17.5px;color:#3a7fc0">宽松长袖t恤女白色纯棉打底衫2025新款百搭时尚印<br>花上衣韩版春秋</div>
  <div class="abs ob" style="left:1718px;top:672px;width:60px">认领到<i class="caret" style="position:static;display:inline-block;vertical-align:2px;margin-left:3px;border-top-color:#5b7c9c"></i></div>
  <div class="abs ob" style="left:1781px;top:672px;width:71px;text-align:left;padding-left:7px"><svg style="vertical-align:-1px;margin-right:2px" width="13" height="12" viewBox="0 0 13 12"><path d="M9 1.5 H2 A1 1 0 0 0 1 2.5 V10 A1 1 0 0 0 2 11 H9.5 A1 1 0 0 0 10.5 10 V7" fill="none" stroke="#5b7c9c" stroke-width="1.3"/><path d="M5 8 L5.5 6 L11 0.5 L12.5 2 L7 7.5Z" fill="#5b7c9c"/></svg>编辑<svg style="vertical-align:-1px;margin-left:7px" width="12" height="12" viewBox="0 0 12 12"><circle cx="6" cy="6" r="6" fill="#5b7c9c"/><path d="M6 2.5 V7" stroke="#fff" stroke-width="2"/><circle cx="6" cy="9.2" r="1" fill="#fff"/></svg></div>
  <div class="abs" style="left:226px;top:710.5px;font-size:12px;line-height:16px;color:#555">2</div>
  <div class="abs ob" style="left:1718px;top:699px;width:54px;border-color:#e2aaa2;color:#c27a70;padding-left:2px"><b style="font-size:12px;color:#c27a70">&#x2716;</b> 删除</div>
  <div class="abs ob" style="left:1776px;top:699px;width:54px"><svg style="vertical-align:-1px;margin-right:2px" width="13" height="12" viewBox="0 0 13 12"><path d="M9 1.5 H2 A1 1 0 0 0 1 2.5 V10 A1 1 0 0 0 2 11 H9.5 A1 1 0 0 0 10.5 10 V7" fill="none" stroke="#5b7c9c" stroke-width="1.3"/><path d="M5 8 L5.5 6 L11 0.5 L12.5 2 L7 7.5Z" fill="#5b7c9c"/></svg>备注</div>
  <div class="abs td" style="left:478px;top:732px;color:#3a7fc0">低价货源</div>
  <div class="abs td" style="left:605px;top:732px;color:#3a7fc0">来源网址</div>
  <div class="abs" style="left:478px;top:672px;width:60px;height:60px;overflow:hidden"><svg width="60" height="60" viewBox="0 0 60 60">
<rect width="60" height="60" fill="#4a4944"/><rect width="16" height="60" fill="#3b3a36"/><rect x="0" y="19" width="16" height="2" fill="#8d8a84"/><rect x="3" y="21" width="1.5" height="36" fill="#777"/><rect x="0" y="30" width="15" height="25" fill="#55544f"/><rect x="0" y="53" width="16" height="2" fill="#8a8780"/>
<rect x="44" y="0" width="16" height="60" fill="#b9bcb2"/><path d="M44 0 H60 V28 C56 30 50 26 44 28Z" fill="#7f9a6c"/><path d="M50 0 H60 V12 C57 10 53 8 50 6Z" fill="#a7b98f"/><rect x="52" y="30" width="8" height="30" fill="#dcdbd6"/><rect x="50" y="22" width="3" height="14" fill="#6a4a3a"/>
<path d="M18 0 H44 C44 6 43 12 40 15 L22 16 C19 12 18 6 18 0Z" fill="#6b3a22"/><path d="M25 0 H37 V14 L31 17 L25 14Z" fill="#e8c3aa"/><path d="M29 1 H34 V2.5 H29Z" fill="#c0392b"/>
<path d="M13 17 C18 14 24 13 31 16 C38 13 45 13 50 16 C54 24 55 40 56 47 L51 48 L49 34 L47 56 H17 L15 38 L13 58 L10 56 C10 40 11 24 13 17Z" fill="#f7f7f9"/>
<path d="M25 29 C28 27 33 26 38 28 L37 32 L26 33Z" fill="#9b9b9b"/><rect x="29" y="34" width="4" height="2" fill="#c44"/><path d="M44 53 L50 48 L52 52 L47 56Z" fill="#e6c2a8"/>
<rect x="16" y="56" width="31" height="4" fill="#2d3f66"/><rect x="25" y="55.5" width="12" height="2.5" fill="#8b7a55"/></svg></div>
  <i class="cb" style="left:224px;top:770px"></i>
  <div class="abs td" style="left:286px;top:766px">755233154193</div>
  <div class="abs td" style="left:888px;top:766px">￥19.21</div>
  <div class="abs td" style="left:1303px;top:766px;line-height:17px">创建者：&nbsp;test4444<br>所有者：&nbsp;待主账号分配</div>
  <div class="abs td" style="left:1462px;top:766px;line-height:17px">创建 2025.09.17 17:58:14<br>更新 </div>
  <div class="abs td" style="left:600px;top:766px;line-height:17.5px;color:#3a7fc0">720旋转iPad2025保护套9/10/11代全包9.7亚克力ai</div>
  <div class="abs ob" style="left:1718px;top:766px;width:60px">认领到<i class="caret" style="position:static;display:inline-block;vertical-align:2px;margin-left:3px;border-top-color:#5b7c9c"></i></div>
  <div class="abs ob" style="left:1781px;top:766px;width:71px;text-align:left;padding-left:7px"><svg style="vertical-align:-1px;margin-right:2px" width="13" height="12" viewBox="0 0 13 12"><path d="M9 1.5 H2 A1 1 0 0 0 1 2.5 V10 A1 1 0 0 0 2 11 H9.5 A1 1 0 0 0 10.5 10 V7" fill="none" stroke="#5b7c9c" stroke-width="1.3"/><path d="M5 8 L5.5 6 L11 0.5 L12.5 2 L7 7.5Z" fill="#5b7c9c"/></svg>编辑<svg style="vertical-align:-1px;margin-left:7px" width="12" height="12" viewBox="0 0 12 12"><circle cx="6" cy="6" r="6" fill="#5b7c9c"/><path d="M6 2.5 V7" stroke="#fff" stroke-width="2"/><circle cx="6" cy="9.2" r="1" fill="#fff"/></svg></div>
  <div class="abs" style="left:478px;top:766px;width:60px;height:60px;overflow:hidden"><svg width="60" height="60" viewBox="0 0 60 60"><rect width="60" height="60" fill="#e9e5e3"/><text x="34" y="8" font-size="7" fill="#4a6aa8" font-family="Liberation Sans">720°旋转</text><rect x="3" y="4" width="22" height="4" fill="#cfc8c2"/><rect x="6" y="9" width="30" height="3" fill="#f3e3b0"/></svg></div>
  <div class="abs" style="left:1016px;top:766px;width:101px;height:20px;border-radius:4px;background:#e8e8e8;color:#999;font-size:12px;line-height:23px;padding-left:8px;width:102px">shopee全球商品</div>
  <svg class="abs" style="left:1840px;top:730px" width="35" height="47" viewBox="0 0 35 47"><defs><radialGradient id="mg" cx="0.5" cy="0.4" r="0.6"><stop offset="0" stop-color="#ffb060"/><stop offset="1" stop-color="#f07a1a"/></radialGradient></defs><circle cx="34" cy="31" r="16" fill="url(#mg)"/><ellipse cx="33" cy="34" rx="12" ry="8" fill="#fdeee6"/><path d="M25 33 H28 M33 33 H36" stroke="#333" stroke-width="1.3"/><path d="M12 30 L16 40" stroke="#3d6ef0" stroke-width="1.5"/><path d="M12 23 L13 26 L16 27 L13 28 L12 31 L11 28 L8 27 L11 26Z" fill="#4a7af5"/><path d="M9 33 L10 35 L12 36 L10 37 L9 39 L8 37 L6 36 L8 35Z" fill="#4a7af5"/><path d="M32 8 L33 11 L36 12 L33 13 L32 16 L31 13 L28 12 L31 11Z" fill="#ffc94a"/><circle cx="18" cy="39" r="3" fill="#f5913a"/></svg>
</div>
</body></html>
